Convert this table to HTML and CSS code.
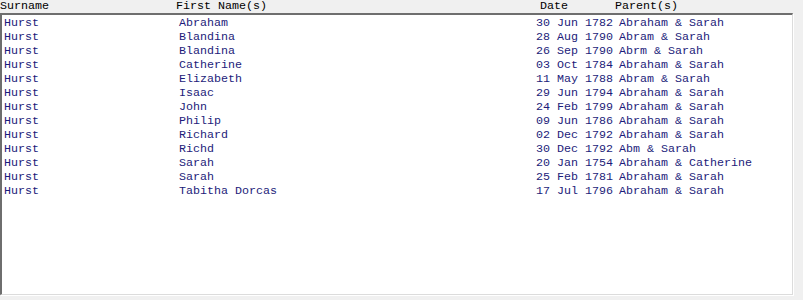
FILE: index.html
```html
<!DOCTYPE html>
<html>
<head>
<meta charset="utf-8">
<link rel="stylesheet" href="styles.css">
</head>
<body>
<div class="view">
  <div class="head">
    <span class="hc c1">Surname</span>
    <span class="hc c2">First Name(s)</span>
    <span class="hc c3">Date</span>
    <span class="hc c4">Parent(s)</span>
  </div>
  <div class="list">
    <div class="row"><span>Hurst</span><span>Abraham</span><span>30 Jun 1782</span><span>Abraham &amp; Sarah</span></div>
    <div class="row"><span>Hurst</span><span>Blandina</span><span>28 Aug 1790</span><span>Abram &amp; Sarah</span></div>
    <div class="row"><span>Hurst</span><span>Blandina</span><span>26 Sep 1790</span><span>Abrm &amp; Sarah</span></div>
    <div class="row"><span>Hurst</span><span>Catherine</span><span>03 Oct 1784</span><span>Abraham &amp; Sarah</span></div>
    <div class="row"><span>Hurst</span><span>Elizabeth</span><span>11 May 1788</span><span>Abram &amp; Sarah</span></div>
    <div class="row"><span>Hurst</span><span>Isaac</span><span>29 Jun 1794</span><span>Abraham &amp; Sarah</span></div>
    <div class="row"><span>Hurst</span><span>John</span><span>24 Feb 1799</span><span>Abraham &amp; Sarah</span></div>
    <div class="row"><span>Hurst</span><span>Philip</span><span>09 Jun 1786</span><span>Abraham &amp; Sarah</span></div>
    <div class="row"><span>Hurst</span><span>Richard</span><span>02 Dec 1792</span><span>Abraham &amp; Sarah</span></div>
    <div class="row"><span>Hurst</span><span>Richd</span><span>30 Dec 1792</span><span>Abm &amp; Sarah</span></div>
    <div class="row"><span>Hurst</span><span>Sarah</span><span>20 Jan 1754</span><span>Abraham &amp; Catherine</span></div>
    <div class="row"><span>Hurst</span><span>Sarah</span><span>25 Feb 1781</span><span>Abraham &amp; Sarah</span></div>
    <div class="row"><span>Hurst</span><span>Tabitha Dorcas</span><span>17 Jul 1796</span><span>Abraham &amp; Sarah</span></div>
  </div>
</div>
</body>
</html>
```

FILE: styles.css
```css
html, body {
  margin: 0;
  padding: 0;
  background: #f0f0f0;
  width: 803px;
  height: 300px;
  overflow: hidden;
}
.view {
  font-family: "Liberation Mono", "Courier New", monospace;
  font-size: 11.67px;
}
.head {
  display: grid;
  grid-template-columns: 176px 364px 75px 1fr;
  height: 13px;
  line-height: 12px;
  color: #000;
  width: 793px;
}
.hc {
  white-space: nowrap;
}
.list {
  background: #fff;
  border-top: 2px solid #6e6e6e;
  border-left: 2px solid #6e6e6e;
  border-right: 1px solid #dcdcdc;
  border-bottom: 1px solid #dcdcdc;
  box-shadow: 1px 1px 0 #fff;
  padding-top: 1px;
  box-sizing: border-box;
  height: 282px;
  width: 793px;
}
.row {
  display: grid;
  grid-template-columns: 175px 357px 83px 1fr;
  padding-left: 2px;
  height: 14px;
  line-height: 14px;
  color: #1c1c7a;
  white-space: pre;
}
```
